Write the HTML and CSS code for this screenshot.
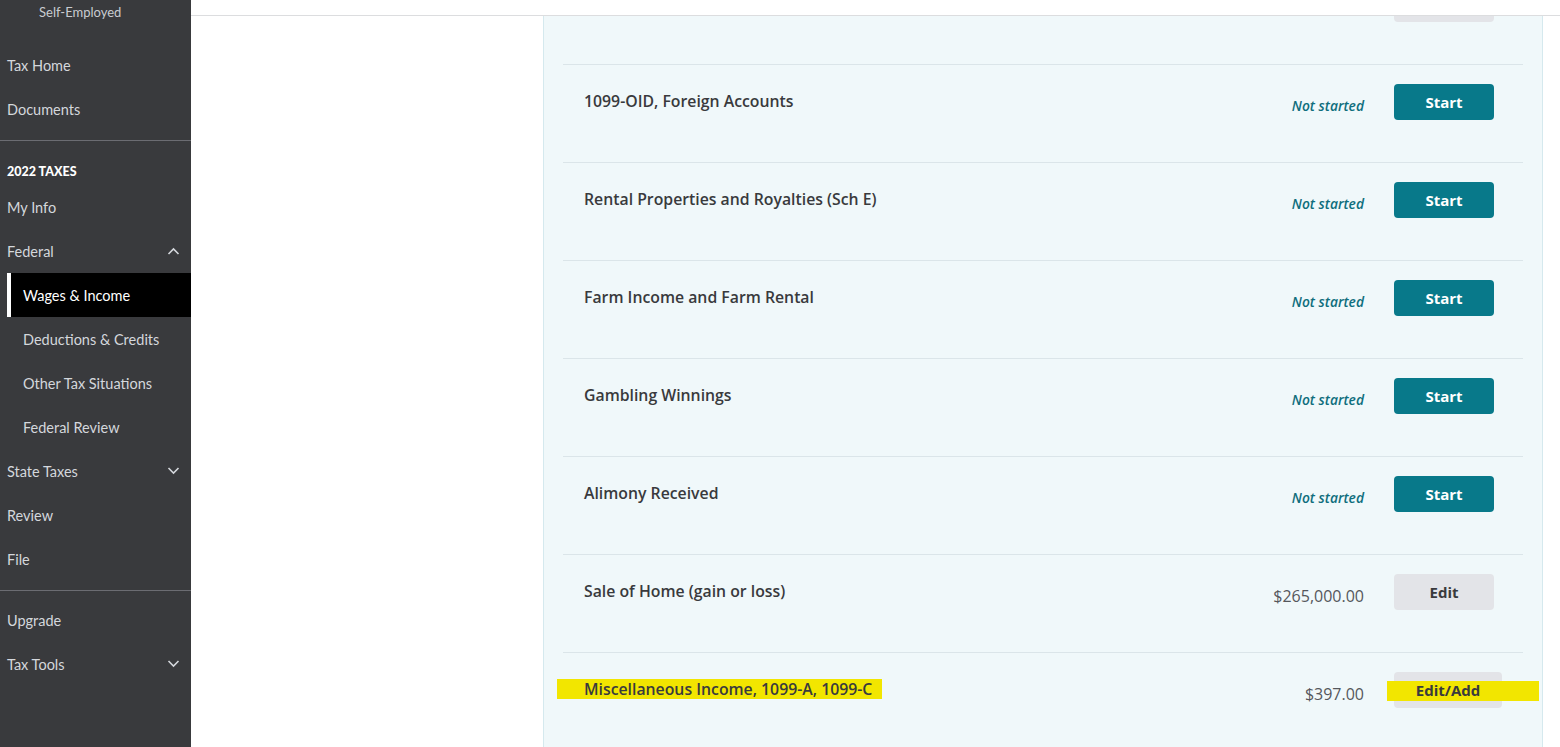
FILE: index.html
```html
<!DOCTYPE html>
<html lang="en">
<head>
    <meta charset="UTF-8">
    <title>Wages &amp; Income</title>
    <link rel="stylesheet" href="styles.css">
</head>
<body>
    <aside class="sidebar">
        <div class="plan">Self-Employed</div>
        <a class="nav-item">Tax Home</a>
        <a class="nav-item">Documents</a>
        <div class="divider"></div>
        <div class="nav-heading">2022 TAXES</div>
        <a class="nav-item">My Info</a>
        <a class="nav-item has-toggle">Federal
            <svg class="chevron" viewBox="0 0 12 8"><path d="M1 7 L6 2 L11 7"/></svg>
        </a>
        <a class="nav-item sub active">Wages &amp; Income</a>
        <a class="nav-item sub">Deductions &amp; Credits</a>
        <a class="nav-item sub">Other Tax Situations</a>
        <a class="nav-item sub">Federal Review</a>
        <a class="nav-item has-toggle">State Taxes
            <svg class="chevron" viewBox="0 0 12 8"><path d="M1 1 L6 6 L11 1"/></svg>
        </a>
        <a class="nav-item">Review</a>
        <a class="nav-item">File</a>
        <div class="divider lower"></div>
        <a class="nav-item">Upgrade</a>
        <a class="nav-item has-toggle">Tax Tools
            <svg class="chevron" viewBox="0 0 12 8"><path d="M1 1 L6 6 L11 1"/></svg>
        </a>
    </aside>

    <main class="main">
        <header class="topbar"></header>
        <div class="scroll-area">
            <section class="panel">
                <!-- row scrolled mostly out of view -->
                <div class="row">
                    <div class="row-title"></div>
                    <button class="btn btn-edit"></button>
                </div>
                <div class="row">
                    <div class="row-title">1099-OID, Foreign Accounts</div>
                    <div class="row-status pending">Not started</div>
                    <button class="btn btn-start">Start</button>
                </div>
                <div class="row">
                    <div class="row-title">Rental Properties and Royalties (Sch E)</div>
                    <div class="row-status pending">Not started</div>
                    <button class="btn btn-start">Start</button>
                </div>
                <div class="row">
                    <div class="row-title">Farm Income and Farm Rental</div>
                    <div class="row-status pending">Not started</div>
                    <button class="btn btn-start">Start</button>
                </div>
                <div class="row">
                    <div class="row-title">Gambling Winnings</div>
                    <div class="row-status pending">Not started</div>
                    <button class="btn btn-start">Start</button>
                </div>
                <div class="row">
                    <div class="row-title">Alimony Received</div>
                    <div class="row-status pending">Not started</div>
                    <button class="btn btn-start">Start</button>
                </div>
                <div class="row">
                    <div class="row-title">Sale of Home (gain or loss)</div>
                    <div class="row-status">$265,000.00</div>
                    <button class="btn btn-edit">Edit</button>
                </div>
                <div class="row">
                    <div class="row-title"><span class="marker title-marker">Miscellaneous Income, 1099-A, 1099-C</span></div>
                    <div class="row-status">$397.00</div>
                    <button class="btn btn-edit wide"><span class="marker btn-marker"></span><span class="btn-label">Edit/Add</span></button>
                </div>
                <div class="row"></div>
            </section>
        </div>
    </main>
</body>
</html>
```

FILE: styles.css
```css
* {
    margin: 0;
    padding: 0;
    box-sizing: border-box;
}

html, body {
    height: 100%;
    overflow: hidden;
}

body {
    display: flex;
    font-family: 'Open Sans', Lato, sans-serif;
    background: #ffffff;
    color: #393a3d;
}

/* Sidebar */
.sidebar {
    width: 191px;
    flex-shrink: 0;
    height: 100%;
    background: #393a3d;
    color: #d4d7dc;
    display: flex;
    flex-direction: column;
    font-family: Lato, 'Open Sans', sans-serif;
}

.plan {
    height: 43px;
    padding: 4px 0 0 39px;
    font-size: 13px;
    line-height: 16px;
    color: #c9ccd1;
}

.nav-item {
    height: 44px;
    display: flex;
    align-items: center;
    justify-content: space-between;
    padding: 0 11px 0 7px;
    font-size: 14.5px;
    color: #d4d7dc;
}

.nav-item.sub {
    padding-left: 23px;
}

.nav-item.active {
    margin-left: 7px;
    padding-left: 12px;
    border-left: 4px solid #ffffff;
    background: #000000;
    color: #ffffff;
}

.chevron {
    width: 13px;
    height: 8px;
    fill: none;
    stroke: #d4d7dc;
    stroke-width: 1.6;
}

.divider {
    height: 1px;
    background: #6b6c72;
    margin-top: 9px;
}

.divider.lower {
    margin-bottom: 7px;
}

.nav-heading {
    margin: 21px 0 3px;
    padding-left: 7px;
    font-size: 12.5px;
    line-height: 20px;
    font-weight: 900;
    color: #ffffff;
}

/* Main */
.main {
    flex: 1;
    display: flex;
    flex-direction: column;
    min-width: 0;
}

.topbar {
    height: 16px;
    flex-shrink: 0;
    border-bottom: 1px solid #dcdddf;
    background: #ffffff;
}

.scroll-area {
    flex: 1;
    overflow: hidden;
    padding-left: 352px;
}

.panel {
    width: 1000px;
    margin-top: -49px;
    background: #f0f8fa;
    border-left: 1px solid #d5e9ee;
    border-right: 1px solid #d5e9ee;
    padding: 0 19px;
}

.row {
    height: 98px;
    display: flex;
    align-items: flex-start;
    padding: 19px 29px 0 21px;
    border-bottom: 1px solid #dbe5e9;
}

.row-title {
    flex: 1;
    margin-top: 7px;
    font-size: 15.8px;
    line-height: 20px;
    font-weight: 600;
    color: #393a3d;
}

.row-status {
    margin: 12px 30px 0 0;
    font-size: 16px;
    line-height: 20px;
    color: #55575c;
}

.row-status.pending {
    font-style: italic;
    font-weight: 600;
    font-size: 13.8px;
    color: #0f6e7d;
}

.btn {
    width: 100px;
    height: 36px;
    border: none;
    border-radius: 4px;
    font-family: inherit;
    font-size: 15px;
    font-weight: 700;
    position: relative;
}

.btn-start {
    background: #08798a;
    color: #ffffff;
}

.btn-edit {
    background: #e3e4e8;
    color: #393a3d;
}

.btn-edit.wide {
    width: 108px;
    margin-right: -8px;
}

/* Yellow highlighter marks */
.marker {
    background: #f2e600;
}

.title-marker {
    display: inline-block;
    margin-left: -27px;
    padding: 0 10px 0 27px;
    line-height: 20px;
}

.btn-marker {
    position: absolute;
    left: -7px;
    right: -37px;
    top: 9px;
    height: 20px;
}

.btn-label {
    position: relative;
}
```
